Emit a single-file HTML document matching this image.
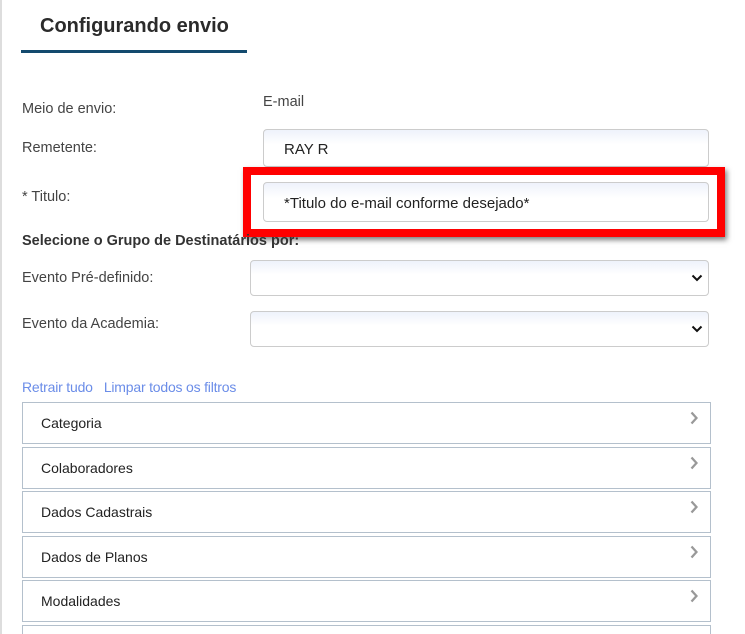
<!DOCTYPE html>
<html style="overflow:hidden;height:634px"><head><meta charset="utf-8"><style>
body{margin:0;width:745px;height:634px;overflow:hidden;background:#fff;font-family:"Liberation Sans",sans-serif;color:#333;position:relative}
.a{position:absolute}
.lbl{font-size:14.5px;color:#444}
.inp{position:absolute;border:1px solid #ccc;border-radius:4px;background:linear-gradient(#eef2fb,#fff 40%);box-sizing:border-box;font-size:15px;color:#222}
.sel svg{position:absolute;right:5px;top:50%;margin-top:-4px}
.p{position:absolute;left:22px;width:689px;height:42px;border:1px solid #b4c0cc;box-sizing:border-box;font-size:14px;color:#222;overflow:hidden}
.p span{position:absolute;left:18px;top:12px}
.p svg{position:absolute;right:12px;top:8px}
</style></head><body>
<div class="a" style="left:0;top:0;width:2px;height:634px;background:#ddd"></div>
<div class="a" style="left:40px;top:15px;font-size:20px;font-weight:bold;color:#2b2b2b">Configurando envio</div>
<div class="a" style="left:21px;top:50px;width:226px;height:3px;background:#134a6e"></div>
<div class="a lbl" style="left:22px;top:101px">Meio de envio:</div>
<div class="a lbl" style="left:263px;top:94px">E-mail</div>
<div class="a lbl" style="left:22px;top:140px">Remetente:</div>
<div class="inp" style="left:263px;top:129px;width:446px;height:38px;padding:11px 0 0 20px">RAY R</div>
<div class="a lbl" style="left:22px;top:189px">* Titulo:</div>
<div class="a" style="left:243px;top:167px;width:482px;height:70px;box-sizing:border-box;border:8px solid #f00;box-shadow:2px 3px 5px rgba(0,0,0,.5)"></div>
<div class="inp" style="left:263px;top:182px;width:446px;height:40px;padding:12px 0 0 20px;font-size:15px">*Titulo do e-mail conforme desejado*</div>
<div class="a" style="left:22px;top:233px;font-size:14.5px;font-weight:bold;color:#333">Selecione o Grupo de Destinatários por:</div>
<div class="a lbl" style="left:22px;top:270px">Evento Pré-definido:</div>
<div class="inp sel" style="left:250px;top:260px;width:459px;height:36px"><svg width="12" height="8" viewBox="0 0 12 8"><path d="M1.5 1.5L6 6l4.5-4.5" fill="none" stroke="#111" stroke-width="2"/></svg></div>
<div class="a lbl" style="left:22px;top:316px">Evento da Academia:</div>
<div class="inp sel" style="left:250px;top:311px;width:459px;height:36px"><svg width="12" height="8" viewBox="0 0 12 8"><path d="M1.5 1.5L6 6l4.5-4.5" fill="none" stroke="#111" stroke-width="2"/></svg></div>
<div class="a" style="left:22px;top:379px;font-size:14px;color:#6b8de8;letter-spacing:-0.2px">Retrair tudo&nbsp;&nbsp;&nbsp;Limpar todos os filtros</div>
<div class="p" style="top:402px"><span>Categoria</span><svg width="8" height="14" viewBox="0 0 8 14"><path d="M1.5 1.5l5 5.5-5 5.5" fill="none" stroke="#999" stroke-width="2.3"/></svg></div>
<div class="p" style="top:447px"><span>Colaboradores</span><svg width="8" height="14" viewBox="0 0 8 14"><path d="M1.5 1.5l5 5.5-5 5.5" fill="none" stroke="#999" stroke-width="2.3"/></svg></div>
<div class="p" style="top:491px"><span>Dados Cadastrais</span><svg width="8" height="14" viewBox="0 0 8 14"><path d="M1.5 1.5l5 5.5-5 5.5" fill="none" stroke="#999" stroke-width="2.3"/></svg></div>
<div class="p" style="top:536px"><span>Dados de Planos</span><svg width="8" height="14" viewBox="0 0 8 14"><path d="M1.5 1.5l5 5.5-5 5.5" fill="none" stroke="#999" stroke-width="2.3"/></svg></div>
<div class="p" style="top:580px"><span>Modalidades</span><svg width="8" height="14" viewBox="0 0 8 14"><path d="M1.5 1.5l5 5.5-5 5.5" fill="none" stroke="#999" stroke-width="2.3"/></svg></div>
<div class="p" style="top:625px;height:9px;border-bottom:none"><svg width="8" height="14" viewBox="0 0 8 14"><path d="M1.5 1.5l5 5.5-5 5.5" fill="none" stroke="#999" stroke-width="2.3"/></svg></div>
</body></html>
